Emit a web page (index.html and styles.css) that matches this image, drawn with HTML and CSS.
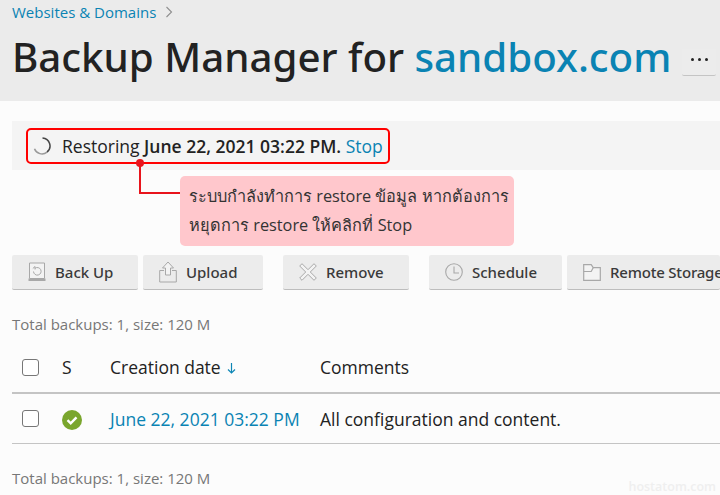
FILE: index.html

```html
<!DOCTYPE html>
<html lang="en">
<head>
  <meta charset="UTF-8">
  <title>Backup Manager for sandbox.com</title>
  <meta name="viewport" content="width=device-width, initial-scale=1.0">
  <link rel="stylesheet" href="styles.css">
</head>
<body>
  <header class="page-head">
    <div class="crumbs">
      <a class="link" href="#">Websites &amp; Domains</a>
      <svg class="crumb-arrow" width="8" height="12" viewBox="0 0 8 12"><path d="M1.500 1l5 5-5 5" fill="none" stroke="#8f8f8f" stroke-width="1.100"/></svg>
    </div>
    <div class="title-row">
      <h1>Backup Manager for <a class="link" href="#">sandbox.com</a></h1>
      <button class="more"><i></i><i></i><i></i></button>
    </div>
  </header>

  <main class="content">
    <div class="status">
      <div class="status-box">
        <svg class="spinner" width="18" height="18" viewBox="0 0 18 18"><path d="M9.500 1a8 8 0 0 1 4.500 14.200" fill="none" stroke="#444" stroke-width="1.500"/><path d="M14 15.200a8 8 0 0 1-12.500-3.500" fill="none" stroke="#999" stroke-width="1.500"/></svg>
        <span>Restoring <b>June 22, 2021 03:22 PM.</b> <a class="link" href="#">Stop</a></span>
      </div>
    </div>

    <div class="connector"><span class="connector-dot"></span></div>
    <div class="note">ระบบกำลังทำการ restore ข้อมูล หากต้องการ<br>หยุดการ restore ให้คลิกที่ Stop</div>

    <div class="toolbar">
      <button class="btn btn-backup">
        <svg width="18" height="20" viewBox="0 0 18 20"><path d="M1.500 1h15v15.500h-15z" fill="#f3f3f3" stroke="#a8a8a8"/><path d="M.5 16.500h17v2.500H.5z" fill="#a8a8a8"/><path d="M5.500 9.500a3.800 3.800 0 1 0 1.500-3.200M4.800 6.500l2.200-2v3" fill="none" stroke="#a8a8a8"/></svg>
        Back Up
      </button>
      <button class="btn btn-upload">
        <svg width="18" height="22" viewBox="0 0 18 22"><path d="M5 9.500H.7v11.500h16.600V9.500H13" fill="none" stroke="#a8a8a8"/><path d="M9 1l5.500 6h-3v7h-5V7h-3z" fill="#f3f3f3" stroke="#a8a8a8"/></svg>
        Upload
      </button>
      <button class="btn btn-remove">
        <svg width="18" height="18" viewBox="0 0 18 18"><path d="M3 .7l6 6 6-6L17.300 3l-6 6 6 6L15 17.300l-6-6-6 6L.7 15l6-6-6-6z" fill="#f3f3f3" stroke="#a8a8a8"/></svg>
        Remove
      </button>
      <button class="btn btn-schedule">
        <svg width="18" height="18" viewBox="0 0 18 18"><circle cx="9" cy="9" r="8.300" fill="none" stroke="#a8a8a8" stroke-width="1.100"/><path d="M9 3.500V10h5" fill="none" stroke="#a8a8a8" stroke-width="1.100"/></svg>
        Schedule
      </button>
      <button class="btn btn-remote">
        <svg width="18" height="17" viewBox="0 0 18 17"><path d="M.7.7h7.500l2 3h7.100v12.600H.7z" fill="#f3f3f3" stroke="#a8a8a8" stroke-width="1.200"/><path d="M.7 7.500h7.500l2-3.800" fill="none" stroke="#a8a8a8" stroke-width="1.200"/></svg>
        Remote Storage
      </button>
    </div>

    <p class="total total-top">Total backups: 1, size: 120 M</p>

    <div class="grid-row grid-head">
      <span class="check"></span>
      <span class="cell-s">S</span>
      <span class="cell-date">Creation date <svg class="sort" width="9" height="11" viewBox="0 0 9 11"><path d="M4.500 0v10M1 6.500l3.500 3.500L8 6.500" fill="none" stroke="#0d86b5" stroke-width="1.200"/></svg></span>
      <span>Comments</span>
    </div>
    <div class="grid-row grid-item">
      <span class="check"></span>
      <span class="cell-s">
        <svg class="ok" width="20" height="20" viewBox="0 0 20 20"><circle cx="10" cy="10" r="10" fill="#7aa62d"/><path d="M5.500 10.200l3.200 3.200 5.800-6" fill="none" stroke="#fff" stroke-width="2.400"/></svg>
      </span>
      <a class="link cell-date" href="#">June 22, 2021 03:22 PM</a>
      <span>All configuration and content.</span>
    </div>

    <p class="total total-bottom">Total backups: 1, size: 120 M</p>
  </main>

  <div class="watermark">hostatom.com</div>
</body>
</html>
```

FILE: styles.css

```css
html, body { height: 100%; }
body { margin: 0; position: relative; width: 720px; height: 495px; overflow: hidden; background: #fcfcfc; color: #222; font-family: "Open Sans", "Noto Sans", "Noto Sans CJK SC", sans-serif; font-size: 17.5px; }
.link { color: #0a83b3; text-decoration: none; }

.page-head { height: 101px; box-sizing: border-box; padding: 0 12px; background: #ebebeb; }
.crumbs { display: flex; align-items: center; gap: 9px; height: 24px; font-size: 15px; }
.title-row { display: flex; align-items: center; margin-top: 9px; height: 48px; }
h1 { margin: 0; font-family: "Noto Sans", sans-serif; font-size: 40.25px; font-weight: 500; line-height: 48px; white-space: nowrap; }
.more { display: flex; justify-content: center; align-items: center; gap: 3.5px; flex: none; width: 34px; height: 27px; margin: 11px 0 0 11px; padding: 0 0 5px; background: #ececec; border: none; border-bottom: 1px solid #c4c4c4; border-radius: 2px; }
.more i { width: 3.5px; height: 3.5px; border-radius: 50%; background: #222; }

.content { padding: 20px 0 0 12px; }
.status { height: 49px; box-sizing: border-box; padding: 7px 0 0 14px; background: #f4f4f4; }
.status-box { display: inline-flex; align-items: center; gap: 11px; width: 364px; height: 36px; box-sizing: border-box; padding-left: 5px; border: 2px solid #f00; border-radius: 5px; white-space: nowrap; }
.status-box svg { flex: none; }
.status-box b { font-weight: 600; }

.connector { position: absolute; left: 139px; top: 163px; width: 41px; height: 31px; box-sizing: border-box; border-left: 2px solid #e8141c; border-bottom: 2px solid #e8141c; }
.connector-dot { position: absolute; left: -5px; top: -4px; width: 8px; height: 8px; border-radius: 50%; background: #e8141c; }
.note { position: absolute; left: 180px; top: 176px; width: 334px; height: 70px; box-sizing: border-box; padding: 6px 9px; background: #ffc7cc; border-radius: 5px; color: #333; font-size: 16.3px; line-height: 29px; white-space: nowrap; }

.toolbar { display: flex; margin-top: 85px; height: 35px; white-space: nowrap; }
.btn { display: flex; align-items: center; gap: 9px; flex: none; height: 35px; box-sizing: border-box; padding: 0 0 0 16px; background: #ececec; border: none; border-bottom: 1px solid #bdbdbd; border-radius: 2px; color: #3a3a3a; font: 500 15px "Noto Sans", sans-serif; text-align: left; }
.btn svg { flex: none; }
.btn-backup { width: 126px; margin-right: 5px; }
.btn-upload { width: 120px; margin-right: 20px; }
.btn-remove { width: 126px; margin-right: 20px; }
.btn-schedule { width: 133px; margin-right: 5px; }
.btn-remote { width: 153px; letter-spacing: -0.2px; }

.total { margin: 0; color: #777; font-size: 15px; line-height: 20px; }
.total-top { margin-top: 24px; }
.total-bottom { margin-top: 24px; }

.grid-row { display: grid; grid-template-columns: 40px 48px 210px 1fr; align-items: center; padding-left: 10px; white-space: nowrap; }
.grid-head { height: 50px; padding-top: 8px; border-bottom: 2px solid #c4c4c4; }
.grid-item { height: 49px; border-bottom: 1px solid #c4c4c4; }
.check { width: 17px; height: 17px; box-sizing: border-box; background: #fff; border: 1px solid #777; border-radius: 3px; }
.cell-s { display: flex; align-items: center; }
.sort { margin-left: 2px; }
.ok { display: block; margin-top: 3px; }

.watermark { position: absolute; right: 4px; bottom: 0; color: #efefef; font-size: 12.5px; font-weight: 600; }
```
